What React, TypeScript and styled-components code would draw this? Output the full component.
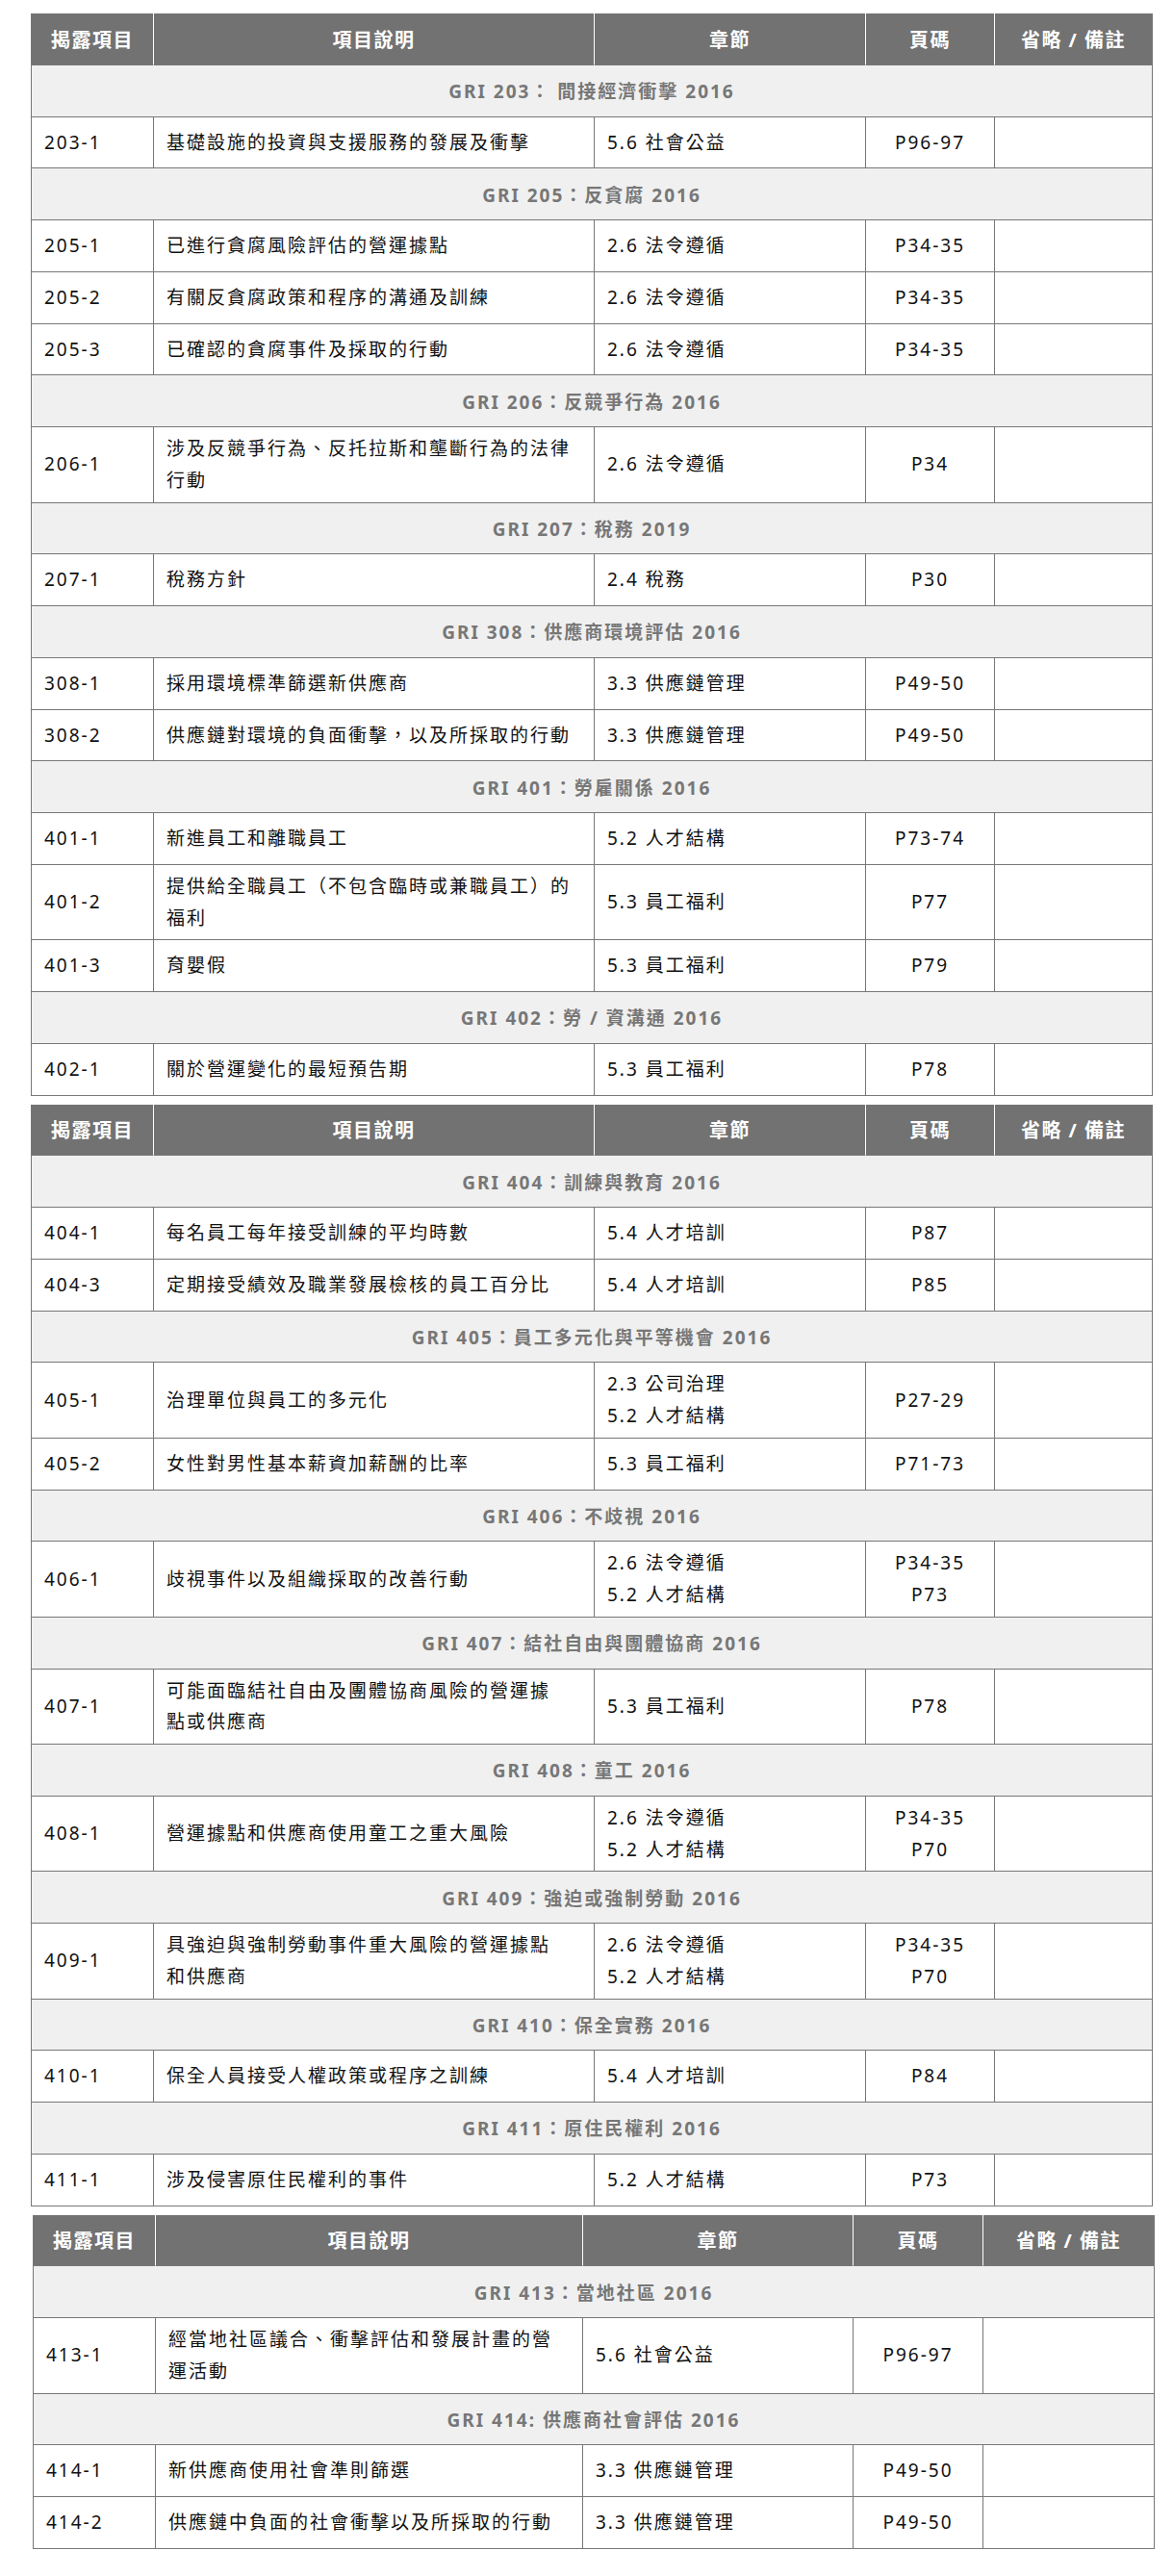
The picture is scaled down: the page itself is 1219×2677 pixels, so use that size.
import React from "react";
import styled, { createGlobalStyle } from "styled-components";

type Item = {
  code: string;
  desc: string[];
  chapter: string[];
  page: string[];
};

type Group = {
  title: string;
  items: Item[];
};

type Sheet = {
  cols: number[];
  inset: number;
  groups: Group[];
};

const BORDER = "#777777";

const GlobalStyle = createGlobalStyle`
  body {
    margin: 0;
    background: #ffffff;
    font-family: "Noto Sans", "Noto Sans CJK TC", sans-serif;
  }
`;

const Page = styled.div`
  padding: 14px 0 24px 32px;
  display: flex;
  flex-direction: column;
  gap: 9px;
`;

const Table = styled.div<{ $inset: number }>`
  margin-left: ${p => p.$inset}px;
  border-left: 1px solid ${BORDER};
  align-self: flex-start;
`;

const Row = styled.div<{ $cols: number[] }>`
  display: grid;
  grid-template-columns: ${p => p.$cols.map(c => `${c}px`).join(" ")};
`;

const Cell = styled.div<{ $center?: boolean }>`
  box-sizing: border-box;
  min-height: 53.75px;
  padding: 6px 13px;
  display: flex;
  flex-direction: column;
  justify-content: center;
  align-items: ${p => (p.$center ? "center" : "flex-start")};
  text-align: ${p => (p.$center ? "center" : "left")};
  border-right: 1px solid ${BORDER};
  border-bottom: 1px solid ${BORDER};
  font-size: 19px;
  line-height: 32.75px;
  letter-spacing: 2px;
  color: #111111;
  white-space: nowrap;
`;

const HeadCell = styled.div<{ $last?: boolean }>`
  box-sizing: border-box;
  min-height: 53.75px;
  display: flex;
  align-items: center;
  justify-content: center;
  background: #727272;
  border-right: 1px solid ${p => (p.$last ? BORDER : "#ffffff")};
  border-bottom: 1px solid ${BORDER};
  color: #ffffff;
  font-size: 20px;
  font-weight: 700;
  letter-spacing: 1.5px;
`;

const GroupCell = styled.div`
  grid-column: 1 / -1;
  box-sizing: border-box;
  min-height: 53.75px;
  display: flex;
  align-items: center;
  justify-content: center;
  background: #f0f0f0;
  border-right: 1px solid ${BORDER};
  border-bottom: 1px solid ${BORDER};
  color: #777777;
  font-size: 19px;
  font-weight: 700;
  letter-spacing: 2px;
`;

const Line = styled.span`
  display: block;
`;

const heads = ["揭露項目", "項目說明", "章節", "頁碼", "省略 / 備註"];

const it = (code: string, desc: string[], chapter: string[], page: string[]): Item => ({
  code,
  desc,
  chapter,
  page,
});

const wide = [127, 458, 282, 134, 164];

const sheets: Sheet[] = [
  {
    cols: wide,
    inset: 0,
    groups: [
      {
        title: "GRI 203： 間接經濟衝擊 2016",
        items: [it("203-1", ["基礎設施的投資與支援服務的發展及衝擊"], ["5.6 社會公益"], ["P96-97"])],
      },
      {
        title: "GRI 205：反貪腐 2016",
        items: [
          it("205-1", ["已進行貪腐風險評估的營運據點"], ["2.6 法令遵循"], ["P34-35"]),
          it("205-2", ["有關反貪腐政策和程序的溝通及訓練"], ["2.6 法令遵循"], ["P34-35"]),
          it("205-3", ["已確認的貪腐事件及採取的行動"], ["2.6 法令遵循"], ["P34-35"]),
        ],
      },
      {
        title: "GRI 206：反競爭行為 2016",
        items: [
          it("206-1", ["涉及反競爭行為、反托拉斯和壟斷行為的法律", "行動"], ["2.6 法令遵循"], ["P34"]),
        ],
      },
      {
        title: "GRI 207：稅務 2019",
        items: [it("207-1", ["稅務方針"], ["2.4 稅務"], ["P30"])],
      },
      {
        title: "GRI 308：供應商環境評估 2016",
        items: [
          it("308-1", ["採用環境標準篩選新供應商"], ["3.3 供應鏈管理"], ["P49-50"]),
          it("308-2", ["供應鏈對環境的負面衝擊，以及所採取的行動"], ["3.3 供應鏈管理"], ["P49-50"]),
        ],
      },
      {
        title: "GRI 401：勞雇關係 2016",
        items: [
          it("401-1", ["新進員工和離職員工"], ["5.2 人才結構"], ["P73-74"]),
          it("401-2", ["提供給全職員工（不包含臨時或兼職員工）的", "福利"], ["5.3 員工福利"], ["P77"]),
          it("401-3", ["育嬰假"], ["5.3 員工福利"], ["P79"]),
        ],
      },
      {
        title: "GRI 402：勞 / 資溝通 2016",
        items: [it("402-1", ["關於營運變化的最短預告期"], ["5.3 員工福利"], ["P78"])],
      },
    ],
  },
  {
    cols: wide,
    inset: 0,
    groups: [
      {
        title: "GRI 404：訓練與教育 2016",
        items: [
          it("404-1", ["每名員工每年接受訓練的平均時數"], ["5.4 人才培訓"], ["P87"]),
          it("404-3", ["定期接受績效及職業發展檢核的員工百分比"], ["5.4 人才培訓"], ["P85"]),
        ],
      },
      {
        title: "GRI 405：員工多元化與平等機會 2016",
        items: [
          it("405-1", ["治理單位與員工的多元化"], ["2.3 公司治理", "5.2 人才結構"], ["P27-29"]),
          it("405-2", ["女性對男性基本薪資加薪酬的比率"], ["5.3 員工福利"], ["P71-73"]),
        ],
      },
      {
        title: "GRI 406：不歧視 2016",
        items: [
          it("406-1", ["歧視事件以及組織採取的改善行動"], ["2.6 法令遵循", "5.2 人才結構"], ["P34-35", "P73"]),
        ],
      },
      {
        title: "GRI 407：結社自由與團體協商 2016",
        items: [
          it("407-1", ["可能面臨結社自由及團體協商風險的營運據", "點或供應商"], ["5.3 員工福利"], ["P78"]),
        ],
      },
      {
        title: "GRI 408：童工 2016",
        items: [
          it("408-1", ["營運據點和供應商使用童工之重大風險"], ["2.6 法令遵循", "5.2 人才結構"], ["P34-35", "P70"]),
        ],
      },
      {
        title: "GRI 409：強迫或強制勞動 2016",
        items: [
          it(
            "409-1",
            ["具強迫與強制勞動事件重大風險的營運據點", "和供應商"],
            ["2.6 法令遵循", "5.2 人才結構"],
            ["P34-35", "P70"]
          ),
        ],
      },
      {
        title: "GRI 410：保全實務 2016",
        items: [it("410-1", ["保全人員接受人權政策或程序之訓練"], ["5.4 人才培訓"], ["P84"])],
      },
      {
        title: "GRI 411：原住民權利 2016",
        items: [it("411-1", ["涉及侵害原住民權利的事件"], ["5.2 人才結構"], ["P73"])],
      },
    ],
  },
  {
    cols: [127, 444, 281, 135, 178],
    inset: 2,
    groups: [
      {
        title: "GRI 413：當地社區 2016",
        items: [
          it("413-1", ["經當地社區議合、衝擊評估和發展計畫的營", "運活動"], ["5.6 社會公益"], ["P96-97"]),
        ],
      },
      {
        title: "GRI 414: 供應商社會評估 2016",
        items: [
          it("414-1", ["新供應商使用社會準則篩選"], ["3.3 供應鏈管理"], ["P49-50"]),
          it("414-2", ["供應鏈中負面的社會衝擊以及所採取的行動"], ["3.3 供應鏈管理"], ["P49-50"]),
        ],
      },
    ],
  },
];

const Lines = ({ lines }: { lines: string[] }) => (
  <>
    {lines.map((l, i) => (
      <Line key={i}>{l}</Line>
    ))}
  </>
);

const IndexTable = ({ sheet }: { sheet: Sheet }) => (
  <Table $inset={sheet.inset}>
    <Row $cols={sheet.cols}>
      {heads.map((h, i) => (
        <HeadCell key={h} $last={i === heads.length - 1}>
          {h}
        </HeadCell>
      ))}
    </Row>
    {sheet.groups.map(g => (
      <React.Fragment key={g.title}>
        <Row $cols={sheet.cols}>
          <GroupCell>{g.title}</GroupCell>
        </Row>
        {g.items.map(item => (
          <Row $cols={sheet.cols} key={item.code}>
            <Cell>{item.code}</Cell>
            <Cell>
              <Lines lines={item.desc} />
            </Cell>
            <Cell>
              <Lines lines={item.chapter} />
            </Cell>
            <Cell $center>
              <Lines lines={item.page} />
            </Cell>
            <Cell />
          </Row>
        ))}
      </React.Fragment>
    ))}
  </Table>
);

export default function App() {
  return (
    <>
      <GlobalStyle />
      <Page>
        {sheets.map((s, i) => (
          <IndexTable key={i} sheet={s} />
        ))}
      </Page>
    </>
  );
}
